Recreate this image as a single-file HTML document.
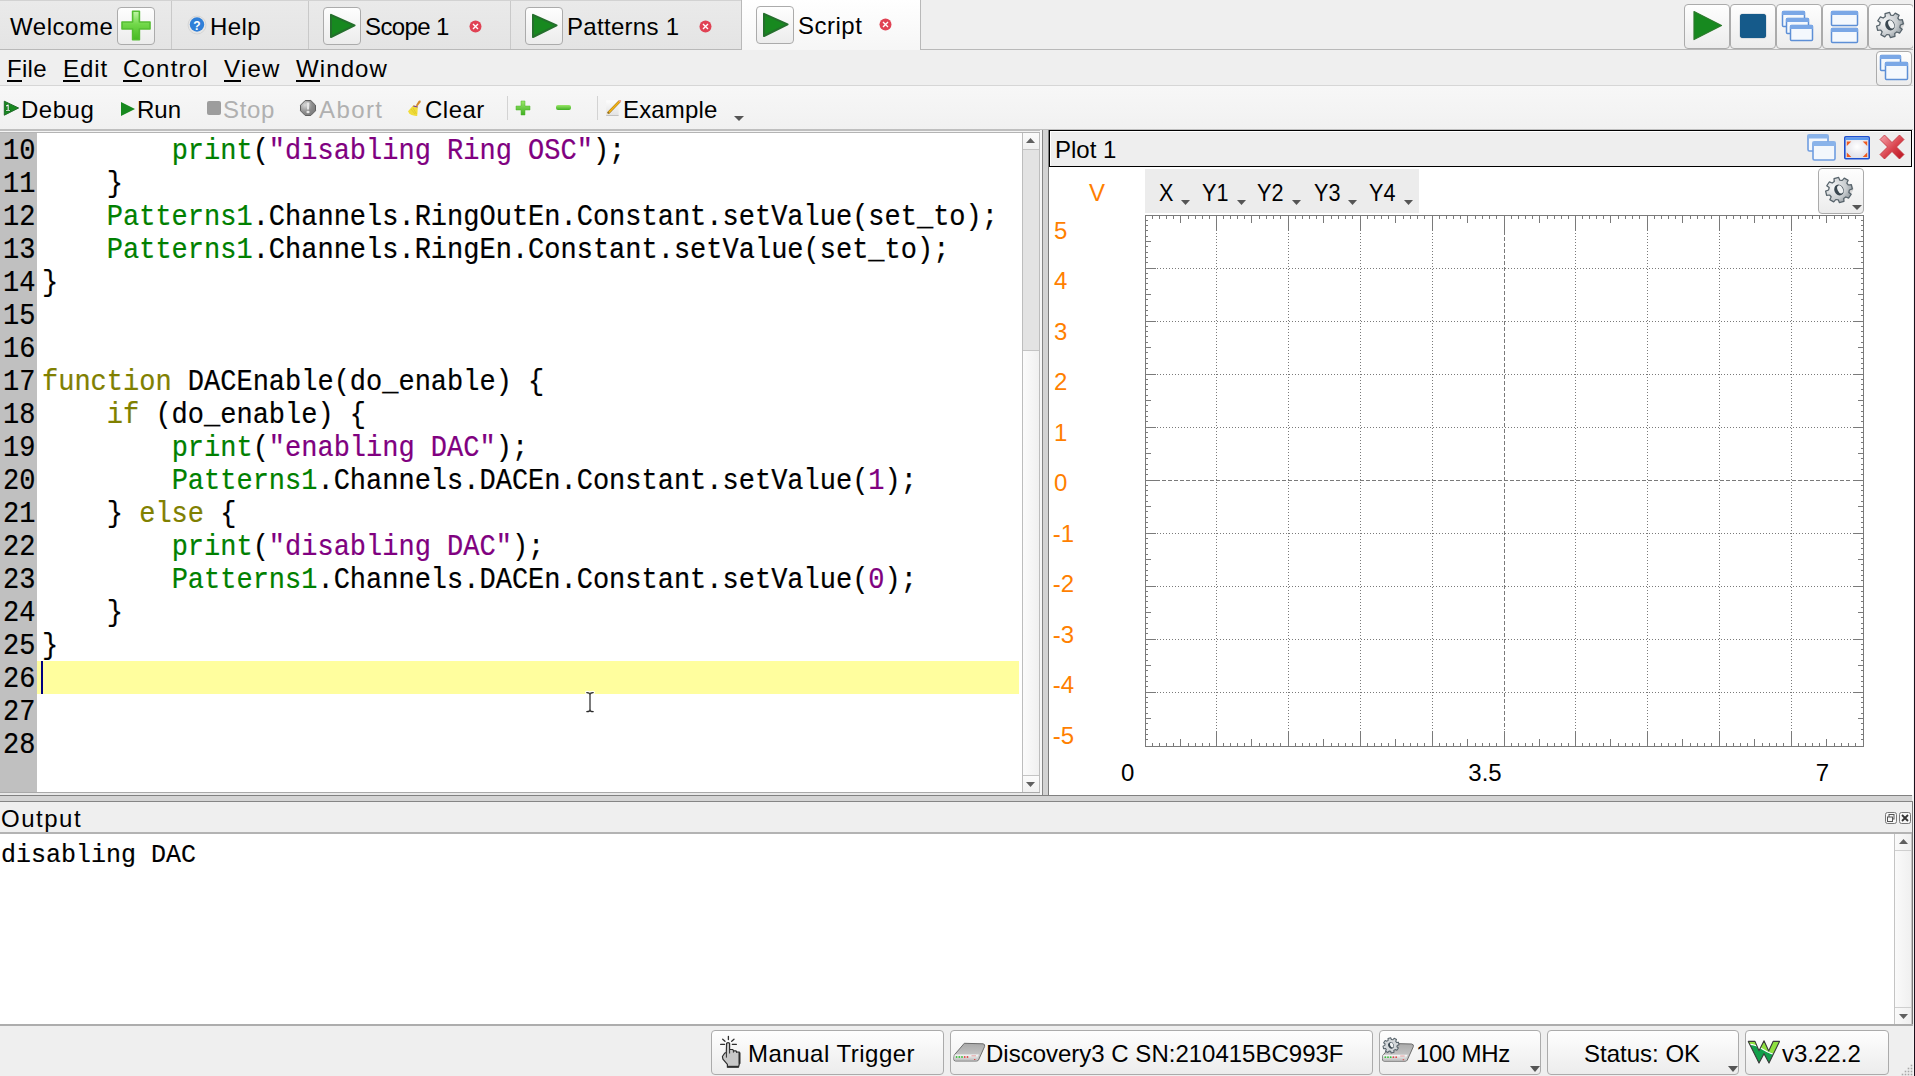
<!DOCTYPE html>
<html><head><meta charset="utf-8">
<style>
*{box-sizing:border-box;margin:0;padding:0}
html,body{width:1915px;height:1076px;overflow:hidden;background:#efefef;font-family:"Liberation Sans",sans-serif;font-size:24px;color:#000}
.a{position:absolute}
.t{position:absolute;white-space:pre;line-height:24px;height:24px}
.btn{position:absolute;border:1px solid #ababab;border-radius:4px;background:linear-gradient(#fefefe,#ececec)}
.mono{font-family:"Liberation Mono",monospace}
.cl{transform:scaleY(1.1);transform-origin:0 24px;-webkit-text-stroke-width:0.2px}
.g{color:#008000}.p{color:#800080}.o{color:#808000}
.dis{color:#b0b0b0}
u{text-decoration:none;box-shadow:0 -2px 0 #000 inset;padding-bottom:0px;display:inline-block;height:25px;vertical-align:top}
</style></head><body>
<!-- TAB BAR -->
<div class="a" style="left:0;top:0;width:741px;height:49px;background:linear-gradient(#eaeaea,#e4e4e4);border-top:1px solid #d2d2d2"></div>
<div class="a" style="left:0;top:49px;width:1915px;height:1px;background:#b9b9b9"></div>
<div class="a" style="left:171px;top:1px;width:1px;height:48px;background:#c9c9c9"></div>
<div class="a" style="left:308px;top:1px;width:1px;height:48px;background:#c9c9c9"></div>
<div class="a" style="left:510px;top:1px;width:1px;height:48px;background:#c9c9c9"></div>
<div class="a" style="left:741px;top:0;width:1px;height:49px;background:#b9b9b9"></div>
<div class="a" style="left:742px;top:0;width:178px;height:50px;background:linear-gradient(#ffffff,#f6f6f6)"></div>
<div class="a" style="left:920px;top:0;width:1px;height:49px;background:#b9b9b9"></div>

<div class="t" style="left:10px;top:15px;letter-spacing:0.55px">Welcome</div>
<div class="btn" style="left:117px;top:7px;width:38px;height:38px"></div>
<svg class="a" style="left:117px;top:7px" width="38" height="38" viewBox="0 0 38 38">
 <defs><linearGradient id="gp" x1="0" y1="0" x2="0" y2="1"><stop offset="0" stop-color="#c2f7a8"/><stop offset="0.45" stop-color="#72d84a"/><stop offset="1" stop-color="#46b922"/></linearGradient></defs>
 <path d="M15.6 4.2h6.8v10.8h10.6v7H22.4v10.8h-6.8V22H5v-7h10.6z" fill="url(#gp)" stroke="#55bd33" stroke-width="1.6" stroke-linejoin="round"/>
</svg>
<svg class="a" style="left:187px;top:15px" width="20" height="20" viewBox="0 0 20 20">
 <circle cx="10" cy="10" r="9" fill="#e6e6e6" stroke="#d0d0d0" stroke-width="0.8"/>
 <circle cx="10" cy="9.5" r="7.2" fill="#2f7fd8"/>
 <text x="10" y="15" text-anchor="middle" font-family="Liberation Sans" font-weight="bold" font-size="12" fill="#fff">?</text>
</svg>
<div class="t" style="left:210px;top:15px;letter-spacing:0.4px">Help</div>

<div class="btn" style="left:323px;top:7px;width:38px;height:38px"></div>
<svg class="a" style="left:323px;top:7px" width="38" height="38" viewBox="0 0 38 38"><path d="M8 7.8 L31.6 18.3 L8 30 Z" fill="#17891f" stroke="#246f2c" stroke-width="2" stroke-linejoin="round"/></svg>
<div class="t" style="left:365px;top:15px;letter-spacing:-0.6px">Scope 1</div>
<svg class="a" style="left:469px;top:20px" width="13" height="13" viewBox="0 0 13 13"><circle cx="6.5" cy="6.5" r="6" fill="#e04254"/><path d="M4 4L9 9M9 4L4 9" stroke="#fff" stroke-width="1.4"/></svg>

<div class="btn" style="left:525px;top:7px;width:38px;height:38px"></div>
<svg class="a" style="left:525px;top:7px" width="38" height="38" viewBox="0 0 38 38"><path d="M8 7.8 L31.6 18.3 L8 30 Z" fill="#17891f" stroke="#246f2c" stroke-width="2" stroke-linejoin="round"/></svg>
<div class="t" style="left:567px;top:15px;letter-spacing:0.3px">Patterns 1</div>
<svg class="a" style="left:699px;top:20px" width="13" height="13" viewBox="0 0 13 13"><circle cx="6.5" cy="6.5" r="6" fill="#e04254"/><path d="M4 4L9 9M9 4L4 9" stroke="#fff" stroke-width="1.4"/></svg>

<div class="btn" style="left:756px;top:6px;width:38px;height:38px"></div>
<svg class="a" style="left:756px;top:6px" width="38" height="38" viewBox="0 0 38 38"><path d="M8 7.8 L31.6 18.3 L8 30 Z" fill="#17891f" stroke="#246f2c" stroke-width="2" stroke-linejoin="round"/></svg>
<div class="t" style="left:798px;top:14px;letter-spacing:0.5px">Script</div>
<svg class="a" style="left:879px;top:18px" width="13" height="13" viewBox="0 0 13 13"><circle cx="6.5" cy="6.5" r="6" fill="#e04254"/><path d="M4 4L9 9M9 4L4 9" stroke="#fff" stroke-width="1.4"/></svg>

<!-- right top buttons -->
<div class="btn" style="left:1684px;top:4px;width:46px;height:45px"></div>
<svg class="a" style="left:1684px;top:4px" width="46" height="45" viewBox="0 0 46 45"><path d="M10 7.5 L37.5 21.5 L10 35.5 Z" fill="#17891f" stroke="#2a7a2a" stroke-width="1.2" stroke-linejoin="round"/></svg>
<div class="btn" style="left:1730px;top:4px;width:46px;height:45px"></div>
<div class="a" style="left:1740px;top:14px;width:26px;height:24px;background:#155a8a;border-radius:3px;box-shadow:0 0 1px #0b3a5a"></div>
<div class="btn" style="left:1776px;top:4px;width:46px;height:45px"></div>
<svg class="a" style="left:1776px;top:4px" width="46" height="45" viewBox="0 0 46 45">
 <g stroke="#5d8fd6" stroke-width="1.5" fill="#f4f8fd">
 <rect x="6.5" y="7.5" width="22" height="15" rx="1"/><rect x="10.5" y="14.5" width="22" height="15" rx="1"/><rect x="14.5" y="21.5" width="22" height="15" rx="1"/></g>
 <g fill="#7aa7e6"><rect x="6" y="7" width="23" height="4"/><rect x="10" y="14" width="23" height="4"/><rect x="14" y="21" width="23" height="4"/></g>
</svg>
<div class="btn" style="left:1822px;top:4px;width:46px;height:45px"></div>
<svg class="a" style="left:1822px;top:4px" width="46" height="45" viewBox="0 0 46 45">
 <g stroke="#5d8fd6" stroke-width="1.5" fill="#f4f8fd">
 <rect x="9.5" y="7.5" width="26" height="14" rx="1"/><rect x="9.5" y="24.5" width="26" height="14" rx="1"/></g>
 <g fill="#7aa7e6"><rect x="9" y="7" width="27" height="4"/><rect x="9" y="24" width="27" height="4"/></g>
</svg>
<div class="btn" style="left:1868px;top:4px;width:46px;height:45px"></div>
<svg class="a" style="left:1868px;top:4px" width="46" height="45" viewBox="0 0 46 45"><g transform="translate(22,21) scale(1.0) rotate(-25) scale(1,0.92)">
 <defs><radialGradient id="gg2221" cx="0.35" cy="0.3" r="0.8"><stop offset="0" stop-color="#f6f7f8"/><stop offset="0.6" stop-color="#c9cdd0"/><stop offset="1" stop-color="#8a9399"/></radialGradient></defs>
 <ellipse cx="2" cy="4" rx="12" ry="6" fill="#000" opacity="0.12"/>
 <path d="M10.5,-0.7 L13.5,0.3 L12.6,5.0 L9.4,4.8 L7.9,6.9 L9.3,9.8 L5.4,12.4 L3.2,10.0 L0.7,10.5 L-0.3,13.5 L-5.0,12.6 L-4.8,9.4 L-6.9,7.9 L-9.8,9.3 L-12.4,5.4 L-10.0,3.2 L-10.5,0.7 L-13.5,-0.3 L-12.6,-5.0 L-9.4,-4.8 L-7.9,-6.9 L-9.3,-9.8 L-5.4,-12.4 L-3.2,-10.0 L-0.7,-10.5 L0.3,-13.5 L5.0,-12.6 L4.8,-9.4 L6.9,-7.9 L9.8,-9.3 L12.4,-5.4 L10.0,-3.2Z" fill="url(#gg2221)" stroke="#56626a" stroke-width="1.3" stroke-linejoin="round"/>
 <ellipse cx="0" cy="0" rx="4.6" ry="6" fill="#3a4750"/>
 <ellipse cx="1.3" cy="0" rx="2.6" ry="4.6" fill="#f0f2f3"/>
</g></svg>

<!-- MENU BAR -->
<div class="a" style="left:0;top:50px;width:1915px;height:35px;background:#efefef"></div>
<div class="a" style="left:0;top:85px;width:1915px;height:1px;background:#d6d6d6"></div>
<div class="t" style="left:7px;top:57px;letter-spacing:0.3px"><u>F</u>ile</div>
<div class="t" style="left:63px;top:57px;letter-spacing:0.9px"><u>E</u>dit</div>
<div class="t" style="left:123px;top:57px;letter-spacing:1.2px"><u>C</u>ontrol</div>
<div class="t" style="left:224px;top:57px;letter-spacing:1.1px"><u>V</u>iew</div>
<div class="t" style="left:296px;top:57px;letter-spacing:1.1px"><u>W</u>indow</div>
<div class="btn" style="left:1876px;top:51px;width:36px;height:35px"></div>
<svg class="a" style="left:1876px;top:51px" width="36" height="35" viewBox="0 0 36 35">
 <g stroke="#5d8fd6" stroke-width="1.5" fill="#f4f8fd">
 <rect x="4.5" y="4.5" width="20" height="15" rx="1"/><rect x="9.5" y="11.5" width="22" height="17" rx="1"/></g>
 <g fill="#7aa7e6"><rect x="4" y="4" width="21" height="4"/><rect x="9" y="11" width="23" height="4"/></g>
</svg>

<!-- TOOLBAR -->
<div class="a" style="left:0;top:86px;width:1915px;height:43px;background:linear-gradient(#f7f7f7,#f1f1f1)"></div>
<div class="a" style="left:0;top:129px;width:1915px;height:2px;background:#bfbfbf"></div>
<svg class="a" style="left:3px;top:100px" width="17" height="17" viewBox="0 0 17 17"><path d="M1.3 1.2 L15.6 8 L1.3 15.2 Z" fill="#17891f" stroke="#1f6a28" stroke-width="1" stroke-linejoin="round"/><path d="M2.6 11.2h4.8v-1.5h-1.3V4.2H4.5L2.6 5.3v1.4l1.5-0.6v3.6H2.6z" fill="#0a4a12" opacity="0.7"/><path d="M3 10.8h4v-0.9h-1.3V4.6H4.8L3 5.6v0.9l1.6-0.6v4H3z" fill="#fff"/></svg>
<div class="t" style="left:21px;top:98px;letter-spacing:0.5px">Debug</div>
<svg class="a" style="left:120px;top:101px" width="16" height="16" viewBox="0 0 16 16"><path d="M1 1 L15 8 L1 15 Z" fill="#17891f"/></svg>
<div class="t" style="left:137px;top:98px">Run</div>
<div class="a" style="left:207px;top:101px;width:14px;height:14px;background:#9d9d9d;border-radius:2px"></div>
<div class="t dis" style="left:223px;top:98px;letter-spacing:0.7px">Stop</div>
<svg class="a" style="left:299px;top:99px" width="18" height="18" viewBox="0 0 18 18">
 <defs><radialGradient id="gab" cx="0.3" cy="0.3" r="0.8"><stop offset="0" stop-color="#d8d8d8"/><stop offset="0.6" stop-color="#8c8c8c"/><stop offset="1" stop-color="#7a7a7a"/></radialGradient></defs>
 <path d="M6.2 1.5H11.8L16.5 6.2V11.8L11.8 16.5H6.2L1.5 11.8V6.2Z" fill="url(#gab)" stroke="#5e5e5e" stroke-width="1"/>
 <path d="M7.6 3.5H10.4L9.9 10.4H8.1Z" fill="#e6e6e6"/><ellipse cx="9" cy="13" rx="1.6" ry="1.3" fill="#e6e6e6"/>
</svg>
<div class="t dis" style="left:319px;top:98px;letter-spacing:1.4px">Abort</div>
<svg class="a" style="left:406px;top:99px" width="16" height="18" viewBox="0 0 16 18">
 <path d="M14.3 1.6Q15.2 2.2 14.4 3.6L11.4 7.2L9.8 6.4L12.4 2.2Q13.3 1 14.3 1.6Z" fill="#d48a2c"/>
 <path d="M7.3 6.3L11.9 7.4L11.2 16.9Q8 17.2 5 15.8Q2.8 14.2 2 12.2Z" fill="#f0dc3a"/>
 <path d="M7.6 6.4L11.8 7.6L11.5 8.6L7 7.4Z" fill="#7a3fa0"/>
 <path d="M5 10l4 5M7 9l3.5 6" stroke="#d8bf20" stroke-width="0.6"/>
</svg>
<div class="t" style="left:425px;top:98px;letter-spacing:0.5px">Clear</div>
<div class="a" style="left:507px;top:96px;width:1px;height:24px;background:#d3d3d3"></div>
<svg class="a" style="left:515px;top:100px" width="16" height="16" viewBox="0 0 16 16"><defs><linearGradient id="gpl" x1="0" y1="0" x2="0" y2="1"><stop offset="0" stop-color="#9be86a"/><stop offset="1" stop-color="#3fae22"/></linearGradient></defs><path d="M6 1h4v5h5v4h-5v5H6v-5H1V6h5z" fill="url(#gpl)" stroke="#4cb52a" stroke-width="0.5" stroke-linejoin="round"/></svg>
<div class="a" style="left:556px;top:105px;width:15px;height:5px;background:linear-gradient(#9be86a,#3fae22);border-radius:2px"></div>
<div class="a" style="left:597px;top:96px;width:1px;height:24px;background:#d3d3d3"></div>
<svg class="a" style="left:605px;top:100px" width="17" height="17" viewBox="0 0 17 17">
 <defs><linearGradient id="gex" x1="0" y1="0" x2="0" y2="1"><stop offset="0" stop-color="#fdfdfd"/><stop offset="1" stop-color="#e2e2e2"/></linearGradient></defs>
 <rect x="1.2" y="0.4" width="12.4" height="15" fill="url(#gex)"/>
 <rect x="1.2" y="15" width="12.4" height="0.8" fill="#b8b8b8"/>
 <path d="M3.6 12.6L14.3 1.6" stroke="#8a5a00" stroke-width="2.6" stroke-linecap="round"/>
 <path d="M3.6 12.6L14.3 1.6" stroke="#f2b418" stroke-width="1.8" stroke-linecap="round"/>
 <circle cx="15" cy="1" r="1.2" fill="#f3a08a"/>
 <path d="M3 13.2l1.4-0.4l-1-1z" fill="#555"/>
</svg>
<div class="t" style="left:623px;top:98px;letter-spacing:0.15px">Example</div>
<svg class="a" style="left:734px;top:116px" width="11" height="6" viewBox="0 0 11 6"><path d="M0 0h10L5 5z" fill="#555"/></svg>

<!-- EDITOR -->
<div class="a" style="left:0;top:131px;width:1040px;height:1px;background:#f4f4f4"></div>
<div class="a" style="left:0;top:132px;width:1041px;height:1px;background:#b4b4b4"></div>
<div class="a" style="left:0;top:133px;width:1022px;height:659px;background:#fff"></div>
<div class="a" style="left:0;top:133px;width:37px;height:659px;background:#c0c0c0"></div>
<div class="a" style="left:37px;top:661px;width:982px;height:33px;background:#fffe9e"></div>
<div class="a" style="left:41px;top:661px;width:2px;height:33px;background:#000080"></div>
<div class="a mono" style="left:0;top:0;font-size:27px;line-height:33px">
<div class="a cl" style="left:3px;top:136px;white-space:pre">10</div>
<div class="a cl" style="left:42px;top:136px;white-space:pre">        <span class="g">print</span>(<span class="p">"disabling Ring OSC"</span>);</div>
<div class="a cl" style="left:3px;top:169px;white-space:pre">11</div>
<div class="a cl" style="left:42px;top:169px;white-space:pre">    }</div>
<div class="a cl" style="left:3px;top:202px;white-space:pre">12</div>
<div class="a cl" style="left:42px;top:202px;white-space:pre">    <span class="g">Patterns1</span>.Channels.RingOutEn.Constant.setValue(set_to);</div>
<div class="a cl" style="left:3px;top:235px;white-space:pre">13</div>
<div class="a cl" style="left:42px;top:235px;white-space:pre">    <span class="g">Patterns1</span>.Channels.RingEn.Constant.setValue(set_to);</div>
<div class="a cl" style="left:3px;top:268px;white-space:pre">14</div>
<div class="a cl" style="left:42px;top:268px;white-space:pre">}</div>
<div class="a cl" style="left:3px;top:301px;white-space:pre">15</div>
<div class="a cl" style="left:3px;top:334px;white-space:pre">16</div>
<div class="a cl" style="left:3px;top:367px;white-space:pre">17</div>
<div class="a cl" style="left:42px;top:367px;white-space:pre"><span class="o">function</span> DACEnable(do_enable) {</div>
<div class="a cl" style="left:3px;top:400px;white-space:pre">18</div>
<div class="a cl" style="left:42px;top:400px;white-space:pre">    <span class="o">if</span> (do_enable) {</div>
<div class="a cl" style="left:3px;top:433px;white-space:pre">19</div>
<div class="a cl" style="left:42px;top:433px;white-space:pre">        <span class="g">print</span>(<span class="p">"enabling DAC"</span>);</div>
<div class="a cl" style="left:3px;top:466px;white-space:pre">20</div>
<div class="a cl" style="left:42px;top:466px;white-space:pre">        <span class="g">Patterns1</span>.Channels.DACEn.Constant.setValue(<span class="p">1</span>);</div>
<div class="a cl" style="left:3px;top:499px;white-space:pre">21</div>
<div class="a cl" style="left:42px;top:499px;white-space:pre">    } <span class="o">else</span> {</div>
<div class="a cl" style="left:3px;top:532px;white-space:pre">22</div>
<div class="a cl" style="left:42px;top:532px;white-space:pre">        <span class="g">print</span>(<span class="p">"disabling DAC"</span>);</div>
<div class="a cl" style="left:3px;top:565px;white-space:pre">23</div>
<div class="a cl" style="left:42px;top:565px;white-space:pre">        <span class="g">Patterns1</span>.Channels.DACEn.Constant.setValue(<span class="p">0</span>);</div>
<div class="a cl" style="left:3px;top:598px;white-space:pre">24</div>
<div class="a cl" style="left:42px;top:598px;white-space:pre">    }</div>
<div class="a cl" style="left:3px;top:631px;white-space:pre">25</div>
<div class="a cl" style="left:42px;top:631px;white-space:pre">}</div>
<div class="a cl" style="left:3px;top:664px;white-space:pre">26</div>
<div class="a cl" style="left:3px;top:697px;white-space:pre">27</div>
<div class="a cl" style="left:3px;top:730px;white-space:pre">28</div>
</div>
<div class="a" style="left:1022px;top:133px;width:18px;height:659px;background:#e3e3e3;border-left:1px solid #bdbdbd;border-right:1px solid #bdbdbd"></div>
<div class="a" style="left:1023px;top:350px;width:16px;height:425px;background:linear-gradient(90deg,#fbfbfb,#f0f0f0);border-top:1px solid #c4c4c4"></div>
<div class="a" style="left:1023px;top:133px;width:16px;height:17px;background:linear-gradient(#fbfbfb,#f1f1f1);border-bottom:1px solid #c4c4c4"></div>
<svg class="a" style="left:1025px;top:137px" width="11" height="7" viewBox="0 0 11 7"><path d="M1 6L5.5 1L10 6z" fill="#606060"/></svg>
<div class="a" style="left:1023px;top:775px;width:16px;height:17px;background:linear-gradient(#fbfbfb,#f1f1f1);border-top:1px solid #c4c4c4"></div>
<svg class="a" style="left:1025px;top:781px" width="11" height="7" viewBox="0 0 11 7"><path d="M1 1L5.5 6L10 1z" fill="#606060"/></svg>
<div class="a" style="left:0;top:792px;width:1040px;height:1px;background:#a9a9a9"></div>
<div class="a" style="left:0;top:793px;width:1042px;height:2px;background:#e8e8e8"></div>
<div class="a" style="left:1040px;top:130px;width:2px;height:665px;background:#f7f7f7"></div>
<div class="a" style="left:1042px;top:130px;width:7px;height:665px;background:#d3d3d3;border-left:1px solid #858585;border-right:1px solid #7b7b7b"></div>
<svg class="a" style="left:582px;top:688px" width="16" height="28" viewBox="0 0 16 28">
 <g fill="none" stroke-linecap="round">
 <path d="M4.8 4.6Q8 4.6 8 6.8Q8 4.6 11.2 4.6M8 6V22M4.8 23.6Q8 23.6 8 21.4Q8 23.6 11.2 23.6" stroke="#fff" stroke-width="3.6" opacity="0.9"/>
 <path d="M4.8 4.6Q8 4.6 8 6.8Q8 4.6 11.2 4.6M4.8 23.6Q8 23.6 8 21.4Q8 23.6 11.2 23.6" stroke="#2a2a2a" stroke-width="1.3"/>
 <path d="M8 6V22" stroke="#5a5a5a" stroke-width="1.6"/>
 </g>
</svg>
<!-- PLOT PANEL -->
<div class="a" style="left:1049px;top:130px;width:864px;height:665px;background:#fff"></div>
<div class="a" style="left:1913px;top:130px;width:2px;height:665px;background:#6e6e6e"></div>
<div class="a" style="left:1049px;top:130px;width:863px;height:37px;background:#eeeeee;border:1px solid #000;box-shadow:inset 1px 1px 0 #fff"></div>
<div class="t" style="left:1055px;top:138px">Plot 1</div>
<svg class="a" style="left:1805px;top:132px" width="32" height="31" viewBox="0 0 32 31">
 <g stroke="#6f9de0" stroke-width="1.6" fill="#f3f7fc"><rect x="3" y="3" width="20" height="16" rx="1.5"/><rect x="8" y="10" width="22" height="18" rx="1.5"/></g>
 <g fill="#89b3ea"><rect x="2.5" y="2.5" width="21" height="4"/><rect x="7.5" y="9.5" width="23" height="4.5"/></g>
</svg>
<svg class="a" style="left:1843px;top:135px" width="28" height="25" viewBox="0 0 28 25">
 <defs><radialGradient id="gmx" cx="0.5" cy="0.45" r="0.6"><stop offset="0" stop-color="#ffffff"/><stop offset="1" stop-color="#dcdce4"/></radialGradient></defs>
 <rect x="1.8" y="1.8" width="24.4" height="22" rx="1" fill="url(#gmx)" stroke="#1d4fcf" stroke-width="1.6"/>
 <rect x="2.6" y="2.6" width="22.8" height="2.4" fill="#5a9af0"/>
 <path d="M3.8 6.5h4.5l-4.5 4.5zM24.2 6.5h-4.5l4.5 4.5zM3.8 22h4.5l-4.5-4.5zM24.2 22h-4.5l4.5-4.5z" fill="#f05a1e"/>
</svg>
<svg class="a" style="left:1878px;top:133px" width="30" height="30" viewBox="0 0 30 30">
 <defs><linearGradient id="gx" x1="0" y1="0" x2="1" y2="1"><stop offset="0" stop-color="#f6a4ac"/><stop offset="0.55" stop-color="#d9434d"/><stop offset="1" stop-color="#b8101c"/></linearGradient></defs>
 <path d="M2 6.5L6.5 2L14 9.5L21.5 2L26 6.5L18.5 14L26 21.5L21.5 26L14 18.5L6.5 26L2 21.5L9.5 14Z" fill="url(#gx)" stroke="#c0303a" stroke-width="0.8" stroke-linejoin="round"/>
</svg>
<div class="a" style="left:1145px;top:169px;width:274px;height:44px;background:#ececec"></div>
<div class="t" style="left:1159.0px;top:180.6px;font-size:24px;transform:scaleX(0.9);transform-origin:0 0">X</div>
<svg class="a" style="left:1180.5px;top:199.5px" width="9" height="5" viewBox="0 0 9 5"><path d="M0 0h9L4.5 5z" fill="#555"/></svg>
<div class="t" style="left:1201.5px;top:180.6px;font-size:24px;transform:scaleX(0.9);transform-origin:0 0">Y1</div>
<svg class="a" style="left:1236.5px;top:199.5px" width="9" height="5" viewBox="0 0 9 5"><path d="M0 0h9L4.5 5z" fill="#555"/></svg>
<div class="t" style="left:1257.3px;top:180.6px;font-size:24px;transform:scaleX(0.9);transform-origin:0 0">Y2</div>
<svg class="a" style="left:1291.5px;top:199.5px" width="9" height="5" viewBox="0 0 9 5"><path d="M0 0h9L4.5 5z" fill="#555"/></svg>
<div class="t" style="left:1314.1px;top:180.6px;font-size:24px;transform:scaleX(0.9);transform-origin:0 0">Y3</div>
<svg class="a" style="left:1347.5px;top:199.5px" width="9" height="5" viewBox="0 0 9 5"><path d="M0 0h9L4.5 5z" fill="#555"/></svg>
<div class="t" style="left:1369.2px;top:180.6px;font-size:24px;transform:scaleX(0.9);transform-origin:0 0">Y4</div>
<svg class="a" style="left:1403.5px;top:199.5px" width="9" height="5" viewBox="0 0 9 5"><path d="M0 0h9L4.5 5z" fill="#555"/></svg>
<div class="t" style="left:1089px;top:180.6px;font-size:24px;color:#ff7f00">V</div>
<div class="btn" style="left:1818px;top:168px;width:46px;height:46px"></div>
<svg class="a" style="left:1818px;top:168px" width="46" height="46" viewBox="0 0 46 46"><g transform="translate(21,22) scale(1.0) rotate(-25) scale(1,0.92)">
 <defs><radialGradient id="gg2119" cx="0.35" cy="0.3" r="0.8"><stop offset="0" stop-color="#f6f7f8"/><stop offset="0.6" stop-color="#c9cdd0"/><stop offset="1" stop-color="#8a9399"/></radialGradient></defs>
 <ellipse cx="2" cy="4" rx="12" ry="6" fill="#000" opacity="0.12"/>
 <path d="M10.5,-0.7 L13.5,0.3 L12.6,5.0 L9.4,4.8 L7.9,6.9 L9.3,9.8 L5.4,12.4 L3.2,10.0 L0.7,10.5 L-0.3,13.5 L-5.0,12.6 L-4.8,9.4 L-6.9,7.9 L-9.8,9.3 L-12.4,5.4 L-10.0,3.2 L-10.5,0.7 L-13.5,-0.3 L-12.6,-5.0 L-9.4,-4.8 L-7.9,-6.9 L-9.3,-9.8 L-5.4,-12.4 L-3.2,-10.0 L-0.7,-10.5 L0.3,-13.5 L5.0,-12.6 L4.8,-9.4 L6.9,-7.9 L9.8,-9.3 L12.4,-5.4 L10.0,-3.2Z" fill="url(#gg2119)" stroke="#56626a" stroke-width="1.3" stroke-linejoin="round"/>
 <ellipse cx="0" cy="0" rx="4.6" ry="6" fill="#3a4750"/>
 <ellipse cx="1.3" cy="0" rx="2.6" ry="4.6" fill="#f0f2f3"/>
</g><path d="M34 37h10l-5 5z" fill="#555"/></svg>
<svg class="a" style="left:0;top:0" width="1915" height="1076" viewBox="0 0 1915 1076" shape-rendering="crispEdges">
<line x1="1216.5" y1="233" x2="1216.5" y2="730" stroke="#7a7a7a" stroke-dasharray="1 2"/>
<line x1="1288.5" y1="233" x2="1288.5" y2="730" stroke="#7a7a7a" stroke-dasharray="1 2"/>
<line x1="1360.5" y1="233" x2="1360.5" y2="730" stroke="#7a7a7a" stroke-dasharray="1 2"/>
<line x1="1432.5" y1="233" x2="1432.5" y2="730" stroke="#7a7a7a" stroke-dasharray="1 2"/>
<line x1="1504.5" y1="231" x2="1504.5" y2="730" stroke="#7a7a7a" stroke-dasharray="4 2"/>
<line x1="1575.5" y1="233" x2="1575.5" y2="730" stroke="#7a7a7a" stroke-dasharray="1 2"/>
<line x1="1647.5" y1="233" x2="1647.5" y2="730" stroke="#7a7a7a" stroke-dasharray="1 2"/>
<line x1="1719.5" y1="233" x2="1719.5" y2="730" stroke="#7a7a7a" stroke-dasharray="1 2"/>
<line x1="1791.5" y1="233" x2="1791.5" y2="730" stroke="#7a7a7a" stroke-dasharray="1 2"/>
<line x1="1157" y1="268.5" x2="1852" y2="268.5" stroke="#7a7a7a" stroke-dasharray="1 2"/>
<line x1="1157" y1="321.5" x2="1852" y2="321.5" stroke="#7a7a7a" stroke-dasharray="1 2"/>
<line x1="1157" y1="374.5" x2="1852" y2="374.5" stroke="#7a7a7a" stroke-dasharray="1 2"/>
<line x1="1157" y1="427.5" x2="1852" y2="427.5" stroke="#7a7a7a" stroke-dasharray="1 2"/>
<line x1="1156" y1="480.5" x2="1852" y2="480.5" stroke="#7a7a7a" stroke-dasharray="4 2"/>
<line x1="1157" y1="533.5" x2="1852" y2="533.5" stroke="#7a7a7a" stroke-dasharray="1 2"/>
<line x1="1157" y1="586.5" x2="1852" y2="586.5" stroke="#7a7a7a" stroke-dasharray="1 2"/>
<line x1="1157" y1="639.5" x2="1852" y2="639.5" stroke="#7a7a7a" stroke-dasharray="1 2"/>
<line x1="1157" y1="692.5" x2="1852" y2="692.5" stroke="#7a7a7a" stroke-dasharray="1 2"/>
<rect x="1145.5" y="215.5" width="718" height="531" fill="none" stroke="#7a7a7a"/>
<path d="M1152.5 215v4M1152.5 747v-4M1145 220.5h3M1864 220.5h-3M1159.5 215v4M1159.5 747v-4M1145 225.5h3M1864 225.5h-3M1166.5 215v4M1166.5 747v-4M1145 230.5h3M1864 230.5h-3M1173.5 215v4M1173.5 747v-4M1145 236.5h3M1864 236.5h-3M1180.5 215v8M1180.5 747v-8M1145 241.5h6M1864 241.5h-6M1188.5 215v4M1188.5 747v-4M1145 246.5h3M1864 246.5h-3M1195.5 215v4M1195.5 747v-4M1145 252.5h3M1864 252.5h-3M1202.5 215v4M1202.5 747v-4M1145 257.5h3M1864 257.5h-3M1209.5 215v4M1209.5 747v-4M1145 262.5h3M1864 262.5h-3M1216.5 215v16M1216.5 747v-16M1145 268.5h11M1864 268.5h-11M1223.5 215v4M1223.5 747v-4M1145 273.5h3M1864 273.5h-3M1230.5 215v4M1230.5 747v-4M1145 278.5h3M1864 278.5h-3M1237.5 215v4M1237.5 747v-4M1145 283.5h3M1864 283.5h-3M1244.5 215v4M1244.5 747v-4M1145 289.5h3M1864 289.5h-3M1251.5 215v8M1251.5 747v-8M1145 294.5h6M1864 294.5h-6M1259.5 215v4M1259.5 747v-4M1145 299.5h3M1864 299.5h-3M1266.5 215v4M1266.5 747v-4M1145 305.5h3M1864 305.5h-3M1273.5 215v4M1273.5 747v-4M1145 310.5h3M1864 310.5h-3M1280.5 215v4M1280.5 747v-4M1145 315.5h3M1864 315.5h-3M1288.5 215v16M1288.5 747v-16M1145 321.5h11M1864 321.5h-11M1295.5 215v4M1295.5 747v-4M1145 326.5h3M1864 326.5h-3M1302.5 215v4M1302.5 747v-4M1145 331.5h3M1864 331.5h-3M1309.5 215v4M1309.5 747v-4M1145 336.5h3M1864 336.5h-3M1316.5 215v4M1316.5 747v-4M1145 342.5h3M1864 342.5h-3M1323.5 215v8M1323.5 747v-8M1145 347.5h6M1864 347.5h-6M1331.5 215v4M1331.5 747v-4M1145 352.5h3M1864 352.5h-3M1338.5 215v4M1338.5 747v-4M1145 358.5h3M1864 358.5h-3M1345.5 215v4M1345.5 747v-4M1145 363.5h3M1864 363.5h-3M1352.5 215v4M1352.5 747v-4M1145 368.5h3M1864 368.5h-3M1360.5 215v16M1360.5 747v-16M1145 374.5h11M1864 374.5h-11M1367.5 215v4M1367.5 747v-4M1145 379.5h3M1864 379.5h-3M1374.5 215v4M1374.5 747v-4M1145 384.5h3M1864 384.5h-3M1381.5 215v4M1381.5 747v-4M1145 389.5h3M1864 389.5h-3M1388.5 215v4M1388.5 747v-4M1145 395.5h3M1864 395.5h-3M1395.5 215v8M1395.5 747v-8M1145 400.5h6M1864 400.5h-6M1403.5 215v4M1403.5 747v-4M1145 405.5h3M1864 405.5h-3M1410.5 215v4M1410.5 747v-4M1145 411.5h3M1864 411.5h-3M1417.5 215v4M1417.5 747v-4M1145 416.5h3M1864 416.5h-3M1424.5 215v4M1424.5 747v-4M1145 421.5h3M1864 421.5h-3M1432.5 215v16M1432.5 747v-16M1145 427.5h11M1864 427.5h-11M1439.5 215v4M1439.5 747v-4M1145 432.5h3M1864 432.5h-3M1446.5 215v4M1446.5 747v-4M1145 437.5h3M1864 437.5h-3M1453.5 215v4M1453.5 747v-4M1145 442.5h3M1864 442.5h-3M1460.5 215v4M1460.5 747v-4M1145 448.5h3M1864 448.5h-3M1467.5 215v8M1467.5 747v-8M1145 453.5h6M1864 453.5h-6M1475.5 215v4M1475.5 747v-4M1145 458.5h3M1864 458.5h-3M1482.5 215v4M1482.5 747v-4M1145 464.5h3M1864 464.5h-3M1489.5 215v4M1489.5 747v-4M1145 469.5h3M1864 469.5h-3M1496.5 215v4M1496.5 747v-4M1145 474.5h3M1864 474.5h-3M1504.5 215v16M1504.5 747v-16M1145 480.5h11M1864 480.5h-11M1511.5 215v4M1511.5 747v-4M1145 485.5h3M1864 485.5h-3M1518.5 215v4M1518.5 747v-4M1145 490.5h3M1864 490.5h-3M1525.5 215v4M1525.5 747v-4M1145 495.5h3M1864 495.5h-3M1532.5 215v4M1532.5 747v-4M1145 501.5h3M1864 501.5h-3M1539.5 215v8M1539.5 747v-8M1145 506.5h6M1864 506.5h-6M1547.5 215v4M1547.5 747v-4M1145 511.5h3M1864 511.5h-3M1554.5 215v4M1554.5 747v-4M1145 517.5h3M1864 517.5h-3M1561.5 215v4M1561.5 747v-4M1145 522.5h3M1864 522.5h-3M1568.5 215v4M1568.5 747v-4M1145 527.5h3M1864 527.5h-3M1575.5 215v16M1575.5 747v-16M1145 533.5h11M1864 533.5h-11M1582.5 215v4M1582.5 747v-4M1145 538.5h3M1864 538.5h-3M1589.5 215v4M1589.5 747v-4M1145 543.5h3M1864 543.5h-3M1596.5 215v4M1596.5 747v-4M1145 548.5h3M1864 548.5h-3M1603.5 215v4M1603.5 747v-4M1145 554.5h3M1864 554.5h-3M1610.5 215v8M1610.5 747v-8M1145 559.5h6M1864 559.5h-6M1618.5 215v4M1618.5 747v-4M1145 564.5h3M1864 564.5h-3M1625.5 215v4M1625.5 747v-4M1145 570.5h3M1864 570.5h-3M1632.5 215v4M1632.5 747v-4M1145 575.5h3M1864 575.5h-3M1639.5 215v4M1639.5 747v-4M1145 580.5h3M1864 580.5h-3M1647.5 215v16M1647.5 747v-16M1145 586.5h11M1864 586.5h-11M1654.5 215v4M1654.5 747v-4M1145 591.5h3M1864 591.5h-3M1661.5 215v4M1661.5 747v-4M1145 596.5h3M1864 596.5h-3M1668.5 215v4M1668.5 747v-4M1145 601.5h3M1864 601.5h-3M1675.5 215v4M1675.5 747v-4M1145 607.5h3M1864 607.5h-3M1682.5 215v8M1682.5 747v-8M1145 612.5h6M1864 612.5h-6M1690.5 215v4M1690.5 747v-4M1145 617.5h3M1864 617.5h-3M1697.5 215v4M1697.5 747v-4M1145 623.5h3M1864 623.5h-3M1704.5 215v4M1704.5 747v-4M1145 628.5h3M1864 628.5h-3M1711.5 215v4M1711.5 747v-4M1145 633.5h3M1864 633.5h-3M1719.5 215v16M1719.5 747v-16M1145 639.5h11M1864 639.5h-11M1726.5 215v4M1726.5 747v-4M1145 644.5h3M1864 644.5h-3M1733.5 215v4M1733.5 747v-4M1145 649.5h3M1864 649.5h-3M1740.5 215v4M1740.5 747v-4M1145 654.5h3M1864 654.5h-3M1747.5 215v4M1747.5 747v-4M1145 660.5h3M1864 660.5h-3M1754.5 215v8M1754.5 747v-8M1145 665.5h6M1864 665.5h-6M1762.5 215v4M1762.5 747v-4M1145 670.5h3M1864 670.5h-3M1769.5 215v4M1769.5 747v-4M1145 676.5h3M1864 676.5h-3M1776.5 215v4M1776.5 747v-4M1145 681.5h3M1864 681.5h-3M1783.5 215v4M1783.5 747v-4M1145 686.5h3M1864 686.5h-3M1791.5 215v16M1791.5 747v-16M1145 692.5h11M1864 692.5h-11M1798.5 215v4M1798.5 747v-4M1145 697.5h3M1864 697.5h-3M1805.5 215v4M1805.5 747v-4M1145 702.5h3M1864 702.5h-3M1812.5 215v4M1812.5 747v-4M1145 707.5h3M1864 707.5h-3M1819.5 215v4M1819.5 747v-4M1145 713.5h3M1864 713.5h-3M1826.5 215v8M1826.5 747v-8M1145 718.5h6M1864 718.5h-6M1834.5 215v4M1834.5 747v-4M1145 723.5h3M1864 723.5h-3M1841.5 215v4M1841.5 747v-4M1145 729.5h3M1864 729.5h-3M1848.5 215v4M1848.5 747v-4M1145 734.5h3M1864 734.5h-3M1855.5 215v4M1855.5 747v-4M1145 739.5h3M1864 739.5h-3" stroke="#7a7a7a" fill="none"/>
</svg>
<div class="t" style="left:1054px;top:218.6px;color:#ff7f00">5</div>
<div class="t" style="left:1054px;top:269.1px;color:#ff7f00">4</div>
<div class="t" style="left:1054px;top:319.6px;color:#ff7f00">3</div>
<div class="t" style="left:1054px;top:370.1px;color:#ff7f00">2</div>
<div class="t" style="left:1054px;top:420.6px;color:#ff7f00">1</div>
<div class="t" style="left:1054px;top:471.1px;color:#ff7f00">0</div>
<div class="t" style="left:1052.7px;top:521.6px;color:#ff7f00">-1</div>
<div class="t" style="left:1052.7px;top:572.1px;color:#ff7f00">-2</div>
<div class="t" style="left:1052.7px;top:622.6px;color:#ff7f00">-3</div>
<div class="t" style="left:1052.7px;top:673.1px;color:#ff7f00">-4</div>
<div class="t" style="left:1052.7px;top:723.6px;color:#ff7f00">-5</div>
<div class="t" style="left:1027.75px;width:200px;text-align:center;top:760.9px">0</div>
<div class="t" style="left:1385px;width:200px;text-align:center;top:760.9px">3.5</div>
<div class="t" style="left:1722.5px;width:200px;text-align:center;top:760.9px">7</div>
<!-- OUTPUT PANEL -->
<div class="a" style="left:0;top:795px;width:1912px;height:1px;background:#808080"></div>
<div class="a" style="left:0;top:796px;width:1912px;height:5px;background:#d4d4d4"></div>
<div class="a" style="left:0;top:801px;width:1915px;height:1px;background:#858585"></div>
<div class="a" style="left:0;top:802px;width:1913px;height:31px;background:#efefef"></div>
<div class="a" style="left:0;top:832px;width:1913px;height:2px;background:#b3b3b3"></div>
<div class="a" style="left:0;top:834px;width:1894px;height:190px;background:#fff"></div>
<div class="a" style="left:1912px;top:802px;width:3px;height:222px;background:#efefef;border-left:1px solid #7a7a7a"></div>
<div class="t" style="left:1px;top:807px;letter-spacing:1.5px">Output</div>
<div class="a mono" style="left:1px;top:841px;font-size:25px;line-height:30px;white-space:pre;transform:scaleY(1.04);transform-origin:0 22px;-webkit-text-stroke-width:0.15px">disabling DAC</div>
<svg class="a" style="left:1884px;top:811px" width="28" height="14" viewBox="0 0 28 14">
 <rect x="1.5" y="1.5" width="11" height="11" rx="2" fill="#f6f6f6" stroke="#777" stroke-width="1"/>
 <rect x="5" y="3.5" width="5" height="4.5" fill="none" stroke="#555" stroke-width="1"/>
 <rect x="3.5" y="6" width="5" height="4.5" fill="#f6f6f6" stroke="#555" stroke-width="1"/>
 <rect x="15.5" y="1.5" width="11" height="11" rx="2" fill="#f6f6f6" stroke="#777" stroke-width="1"/>
 <path d="M18 4L24 10M24 4L18 10" stroke="#333" stroke-width="1.8"/>
</svg>
<div class="a" style="left:1894px;top:834px;width:18px;height:190px;background:linear-gradient(90deg,#fafafa,#f0f0f0);border-left:1px solid #c4c4c4;border-right:1px solid #c4c4c4"></div>
<div class="a" style="left:1895px;top:850px;width:16px;height:1px;background:#cfcfcf"></div>
<div class="a" style="left:1895px;top:1007px;width:16px;height:1px;background:#cfcfcf"></div>
<svg class="a" style="left:1898px;top:838px" width="11" height="7" viewBox="0 0 11 7"><path d="M1 6L5.5 1L10 6z" fill="#606060"/></svg>
<svg class="a" style="left:1898px;top:1013px" width="11" height="7" viewBox="0 0 11 7"><path d="M1 1L5.5 6L10 1z" fill="#606060"/></svg>
<!-- STATUS BAR -->
<div class="a" style="left:0;top:1024px;width:1915px;height:2px;background:#adadad"></div>
<div class="a" style="left:0;top:1026px;width:1915px;height:50px;background:#efefef"></div>
<div class="btn" style="left:711px;top:1030px;width:233px;height:45px"></div>
<svg class="a" style="left:714px;top:1032px" width="32" height="40" viewBox="0 0 32 40">
 <g stroke="#2e2e2e" stroke-width="1.3" stroke-linecap="round"><path d="M14.4 4.3V7.6M8.7 7.2L11 9.2M20 7.2L17.7 9.2M6.6 12.3H10.6M18.3 12.3H22.4"/></g>
 <path d="M12.6 11.2Q14 10.2 15.6 11.2L15.6 17.5L18.8 17.5L19.5 18.8L22 18.8L22.7 19.8L25.3 20.2L25.3 32L24.5 35.2L13.4 35.2L13.4 32.3L8.9 27.1L8.4 24.5L10.8 21L12.3 20.6Z" fill="#c8c8c8" stroke="#2e2e2e" stroke-width="1.2" stroke-linejoin="round"/>
 <path d="M12.4 20.6V25.6M15.6 17.5V21.5M19.4 18.8V20.6M22.6 19.8V20.8" stroke="#2e2e2e" stroke-width="1"/>
 <path d="M25.6 20.5V31.8" stroke="#2e2e2e" stroke-width="1.8"/>
 <path d="M13.4 34.6H24.6" stroke="#2e2e2e" stroke-width="1.6"/>
</svg>
<div class="t" style="left:748px;top:1042px;letter-spacing:0.5px">Manual Trigger</div>
<div class="btn" style="left:950px;top:1030px;width:423px;height:45px"></div>
<svg class="a" style="left:950px;top:1036px" width="40" height="32" viewBox="0 0 40 32"><defs><linearGradient id="dta" x1="0" y1="0" x2="0" y2="1"><stop offset="0" stop-color="#a9a9a9"/><stop offset="1" stop-color="#d2d2d2"/></linearGradient>
 <linearGradient id="dfa" x1="0" y1="0" x2="0" y2="1"><stop offset="0" stop-color="#fafafa"/><stop offset="1" stop-color="#b9b9b9"/></linearGradient></defs>
 <path d="M14.3 7.3L33 7.8Q35.3 8.2 34.6 10.5L28.5 24Q28 25 26.5 25L5.5 25Q3.5 25 3.8 22.5L4.3 19Z" fill="url(#dta)" stroke="#6d6d6d" stroke-width="1"/>
 <path d="M4.6 18.6L28.9 18.6L26.8 24.2Q26.4 24.6 25.6 24.6L5.6 24.6Q4 24.6 4.1 22.5Z" fill="url(#dfa)"/>
 <g fill="#3cc03c"><circle cx="6.6" cy="21" r="0.9"/><circle cx="9.3" cy="21" r="0.9"/><circle cx="12" cy="21" r="0.9"/></g>
 <g fill="#e04848"><circle cx="14.7" cy="21" r="0.9"/><circle cx="17.5" cy="21" r="0.9"/><rect x="24" y="23" width="1.4" height="1" /></g>
 <path d="M21.5 19.8h4.5" stroke="#e07070" stroke-width="0.6"/></svg>
<div class="t" style="left:986px;top:1042px">Discovery3 C SN:210415BC993F</div>
<div class="btn" style="left:1379px;top:1030px;width:162px;height:45px"></div>
<svg class="a" style="left:1380px;top:1032px" width="40" height="36" viewBox="0 0 40 36"><g transform="translate(-1.3,4.2)"><defs><linearGradient id="dtb" x1="0" y1="0" x2="0" y2="1"><stop offset="0" stop-color="#a9a9a9"/><stop offset="1" stop-color="#d2d2d2"/></linearGradient>
 <linearGradient id="dfb" x1="0" y1="0" x2="0" y2="1"><stop offset="0" stop-color="#fafafa"/><stop offset="1" stop-color="#b9b9b9"/></linearGradient></defs>
 <path d="M14.3 7.3L33 7.8Q35.3 8.2 34.6 10.5L28.5 24Q28 25 26.5 25L5.5 25Q3.5 25 3.8 22.5L4.3 19Z" fill="url(#dtb)" stroke="#6d6d6d" stroke-width="1"/>
 <path d="M4.6 18.6L28.9 18.6L26.8 24.2Q26.4 24.6 25.6 24.6L5.6 24.6Q4 24.6 4.1 22.5Z" fill="url(#dfb)"/>
 <g fill="#3cc03c"><circle cx="6.6" cy="21" r="0.9"/><circle cx="9.3" cy="21" r="0.9"/><circle cx="12" cy="21" r="0.9"/></g>
 <g fill="#e04848"><circle cx="14.7" cy="21" r="0.9"/><circle cx="17.5" cy="21" r="0.9"/><rect x="24" y="23" width="1.4" height="1" /></g>
 <path d="M21.5 19.8h4.5" stroke="#e07070" stroke-width="0.6"/></g>
<g transform="translate(11,13.4) scale(0.6) rotate(-25) scale(1,0.92)">
 <path d="M10.5,-0.7 L13.5,0.3 L12.6,5.0 L9.4,4.8 L7.9,6.9 L9.3,9.8 L5.4,12.4 L3.2,10.0 L0.7,10.5 L-0.3,13.5 L-5.0,12.6 L-4.8,9.4 L-6.9,7.9 L-9.8,9.3 L-12.4,5.4 L-10.0,3.2 L-10.5,0.7 L-13.5,-0.3 L-12.6,-5.0 L-9.4,-4.8 L-7.9,-6.9 L-9.3,-9.8 L-5.4,-12.4 L-3.2,-10.0 L-0.7,-10.5 L0.3,-13.5 L5.0,-12.6 L4.8,-9.4 L6.9,-7.9 L9.8,-9.3 L12.4,-5.4 L10.0,-3.2Z" fill="#d3d7da" stroke="#56626a" stroke-width="1.8" stroke-linejoin="round"/>
 <ellipse cx="0" cy="0" rx="4.6" ry="6" fill="#3a4750"/>
 <ellipse cx="1.3" cy="0" rx="2.6" ry="4.6" fill="#f0f2f3"/>
</g></svg>

<div class="t" style="left:1416px;top:1042px;letter-spacing:-0.3px">100 MHz</div>
<svg class="a" style="left:1530px;top:1066px" width="10" height="6" viewBox="0 0 10 6"><path d="M0 0h10L5 6z" fill="#555"/></svg>
<div class="btn" style="left:1547px;top:1030px;width:192px;height:45px"></div>
<div class="t" style="left:1584px;top:1042px">Status: OK</div>
<svg class="a" style="left:1728px;top:1066px" width="10" height="6" viewBox="0 0 10 6"><path d="M0 0h10L5 6z" fill="#555"/></svg>
<div class="btn" style="left:1745px;top:1030px;width:144px;height:45px"></div>
<svg class="a" style="left:1744px;top:1034px" width="40" height="36" viewBox="0 0 40 36">
 <defs><clipPath id="wc"><path d="M4.3 7.4L11 7.4L15 16.7L20 6.7L24.7 17L29.1 7.4L35.5 7.4L25 29.1L20 19.7L15 29.1Z"/></clipPath></defs>
 <g clip-path="url(#wc)">
  <rect x="0" y="0" width="40" height="36" fill="#12a04a"/>
  <path d="M0 0H40V21.5C33 21.5 24 18 17.5 14.2C13 11.2 9 10.3 5 10.2L0 10Z" fill="#8ee040"/>
  <path d="M5 10.3C9 10.4 13 11.3 17.5 14.5C24 18.6 30 21.4 36 21.5" stroke="#fff" stroke-width="1.3" fill="none"/>
 </g>
 <path d="M4.3 7.4L11 7.4L15 16.7L20 6.7L24.7 17L29.1 7.4L35.5 7.4L25 29.1L20 19.7L15 29.1Z" fill="none" stroke="#3a3a3a" stroke-width="1.1" stroke-linejoin="round"/>
</svg>
<div class="t" style="left:1782px;top:1042px">v3.22.2</div>
<svg class="a" style="left:1890px;top:1060px" width="25" height="16" viewBox="0 0 25 16"><g fill="#a8a8a8"><rect x="20.7" y="4.7" width="1.6" height="1.6"/><rect x="17.7" y="7.7" width="1.6" height="1.6"/><rect x="20.7" y="7.7" width="1.6" height="1.6"/><rect x="14.7" y="10.7" width="1.6" height="1.6"/><rect x="17.7" y="10.7" width="1.6" height="1.6"/><rect x="20.7" y="10.7" width="1.6" height="1.6"/><rect x="11.7" y="13.7" width="1.6" height="1.6"/><rect x="14.7" y="13.7" width="1.6" height="1.6"/><rect x="17.7" y="13.7" width="1.6" height="1.6"/><rect x="20.7" y="13.7" width="1.6" height="1.6"/></g></svg>
<div class="a" style="left:1913px;top:0;width:1px;height:1076px;background:#f4f4f4"></div>
<div class="a" style="left:1914px;top:0;width:1px;height:1076px;background:#1c101c"></div>
</body></html>
